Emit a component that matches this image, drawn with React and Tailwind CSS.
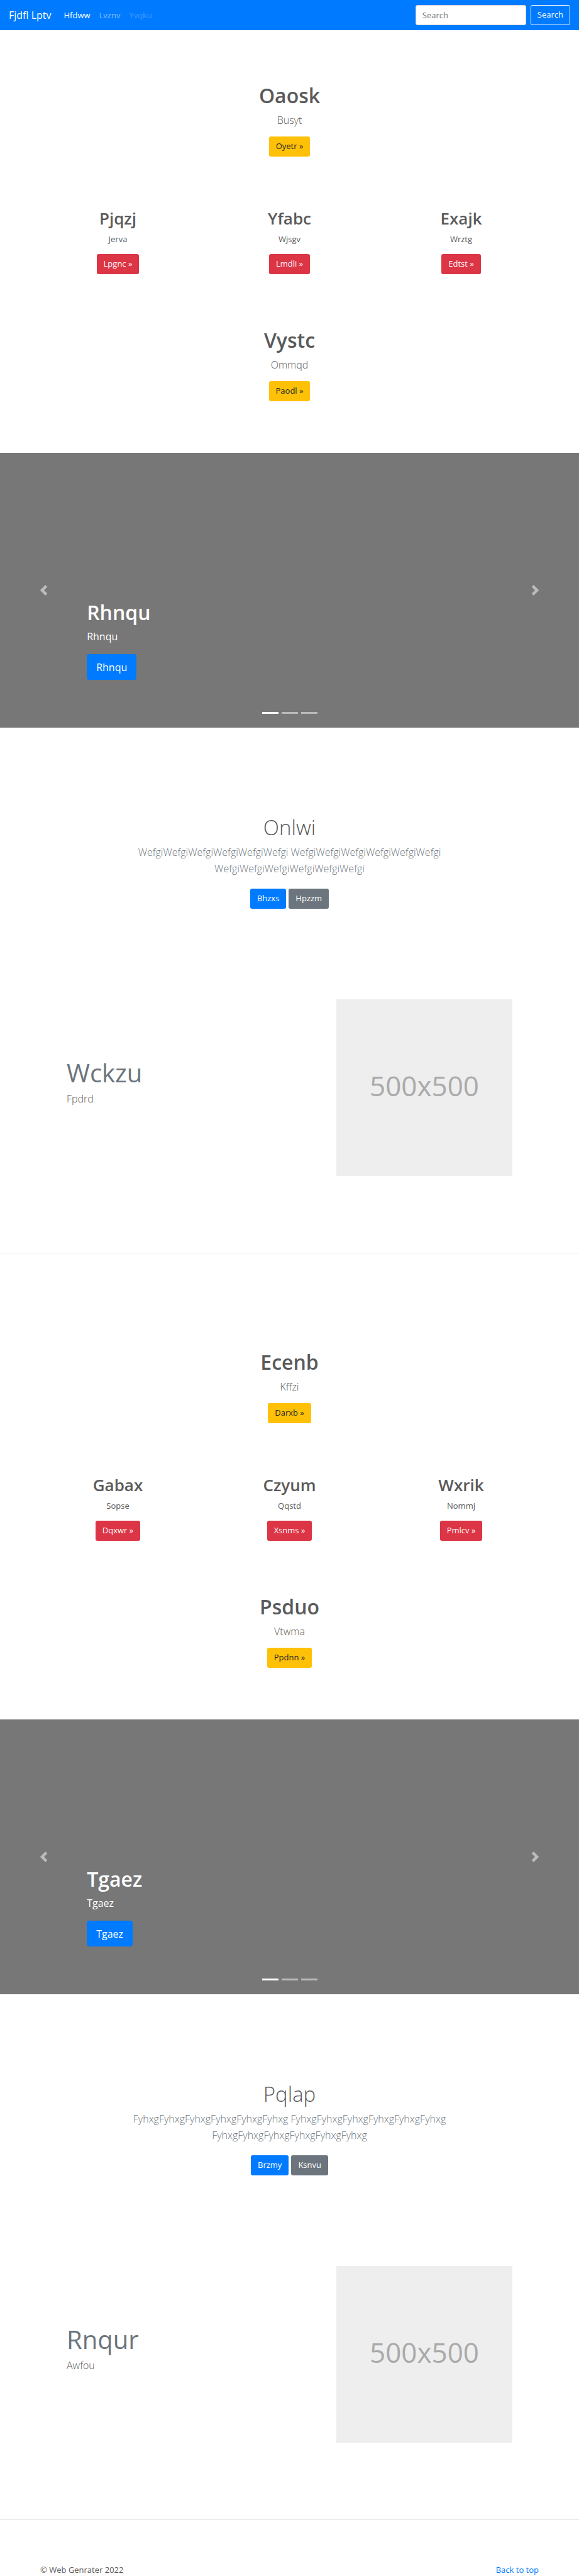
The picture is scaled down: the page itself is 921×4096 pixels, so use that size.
import React from "react";

const sections = [
  {
    top: { title: "Oaosk", text: "Busyt", action: "Oyetr »" },
    columns: [
      { title: "Pjqzj", text: "Jerva", action: "Lpgnc »" },
      { title: "Yfabc", text: "Wjsgv", action: "Lmdli »" },
      { title: "Exajk", text: "Wrztg", action: "Edtst »" },
    ],
    bottom: { title: "Vystc", text: "Ommqd", action: "Paodl »" },
    slide: "Rhnqu",
    album: {
      title: "Onlwi",
      text: "WefgiWefgiWefgiWefgiWefgiWefgi WefgiWefgiWefgiWefgiWefgiWefgi WefgiWefgiWefgiWefgiWefgiWefgi",
      primary: "Bhzxs",
      secondary: "Hpzzm",
    },
    feature: { title: "Wckzu", text: "Fpdrd" },
  },
  {
    top: { title: "Ecenb", text: "Kffzi", action: "Darxb »" },
    columns: [
      { title: "Gabax", text: "Sopse", action: "Dqxwr »" },
      { title: "Czyum", text: "Qqstd", action: "Xsnms »" },
      { title: "Wxrik", text: "Nommj", action: "Pmlcv »" },
    ],
    bottom: { title: "Psduo", text: "Vtwma", action: "Ppdnn »" },
    slide: "Tgaez",
    album: {
      title: "Pqlap",
      text: "FyhxgFyhxgFyhxgFyhxgFyhxgFyhxg FyhxgFyhxgFyhxgFyhxgFyhxgFyhxg FyhxgFyhxgFyhxgFyhxgFyhxgFyhxg",
      primary: "Brzmy",
      secondary: "Ksnvu",
    },
    feature: { title: "Rnqur", text: "Awfou" },
  },
];

const tones = {
  warning: "bg-[#ffc107] text-[#212529]",
  danger: "bg-[#dc3545] text-white",
  primary: "bg-[#007bff] text-white",
  secondary: "bg-[#6c757d] text-white",
};

function Button({ tone, children }) {
  return (
    <a href="#" className={`flex h-8 items-center rounded-[3px] px-[11px] text-[13px] ${tones[tone]}`}>
      {children}
    </a>
  );
}

function Navbar() {
  return (
    <nav className="flex h-12 items-center bg-[#007bff] px-[14px]">
      <a href="#" className="text-[16px] leading-[26px] text-white">Fjdfl Lptv</a>
      <ul className="ml-5 flex gap-[14px] text-[13px] leading-5">
        <li><a href="#" className="text-white">Hfdww</a></li>
        <li><a href="#" className="text-white/50">Lvznv</a></li>
        <li><a href="#" aria-disabled="true" className="text-white/25">Yvqku</a></li>
      </ul>
      <form className="ml-auto flex gap-[7px]">
        <input
          type="search"
          aria-label="Search"
          placeholder="Search"
          className="h-8 w-44 rounded-[3px] border border-[#ced4da] bg-white px-[10px] text-[13px] text-[#495057] placeholder:text-[#6c757d]"
        />
        <button type="button" className="h-8 rounded-[3px] border border-[#f8f9fa] px-[10px] text-[13px] text-[#f8f9fa]">
          Search
        </button>
      </form>
    </nav>
  );
}

function Hero({ title, text, action }) {
  return (
    <section className="flex flex-col items-center text-center">
      <h1 className="mb-[6px] text-[32px] font-semibold leading-[41px]">{title}</h1>
      <p className="mb-[13px] text-[16px] font-light leading-[26px]">{text}</p>
      <Button tone="warning">{action}</Button>
    </section>
  );
}

function Column({ title, text, action }) {
  return (
    <div className="flex flex-col items-center text-center">
      <h2 className="mb-[6px] text-[26px] font-semibold leading-[33px]">{title}</h2>
      <p className="mb-[14px] text-[13px] leading-5">{text}</p>
      <Button tone="danger">{action}</Button>
    </div>
  );
}

function Arrow({ d }) {
  return (
    <svg viewBox="0 0 8 8" className="h-[17px] w-[17px]" fill="#fff" aria-hidden="true">
      <path d={d} />
    </svg>
  );
}

function Carousel({ label }) {
  return (
    <section className="relative bg-[#777]">
      <div className="flex flex-col items-start px-[15%] pb-[76px] pt-[233px] text-white">
        <h1 className="mb-[5px] text-[32px] font-semibold leading-[41px]">{label}</h1>
        <p className="mb-[15px] text-[16px] leading-[26px]">{label}</p>
        <a href="#" className="flex h-[41px] items-center rounded-[4px] bg-[#007bff] px-[15px] text-[16px]">{label}</a>
      </div>
      <button type="button" aria-label="Previous" className="absolute inset-y-0 left-0 flex w-[15%] items-center justify-center opacity-50">
        <Arrow d="M5.25 0l-4 4 4 4 1.5-1.5-2.5-2.5 2.5-2.5-1.5-1.5z" />
      </button>
      <button type="button" aria-label="Next" className="absolute inset-y-0 right-0 flex w-[15%] items-center justify-center opacity-50">
        <Arrow d="M2.75 0l-1.5 1.5 2.5 2.5-2.5 2.5 1.5 1.5 4-4-4-4z" />
      </button>
      <div className="absolute inset-x-0 bottom-[22px] flex justify-center gap-[5px]">
        <span className="h-[3px] w-[26px] bg-white" />
        <span className="h-[3px] w-[26px] bg-white/50" />
        <span className="h-[3px] w-[26px] bg-white/50" />
      </div>
    </section>
  );
}

function Album({ title, text, primary, secondary }) {
  return (
    <section className="mx-auto flex max-w-[546px] flex-col items-center pt-[138px] text-center">
      <h1 className="mb-[6px] text-[33px] font-light leading-[41px]">{title}</h1>
      <p className="mb-[19px] text-[16px] font-light leading-[26px] text-[#6c757d]">{text}</p>
      <div className="flex gap-1">
        <Button tone="primary">{primary}</Button>
        <Button tone="secondary">{secondary}</Button>
      </div>
    </section>
  );
}

function Feature({ title, text }) {
  return (
    <section className="mt-36 flex justify-between px-[106px]">
      <div className="pt-[92px]">
        <h2 className="mb-[3px] text-[40px] leading-[50px] text-[#6c757d]">{title}</h2>
        <p className="text-[16px] font-light leading-[26px]">{text}</p>
      </div>
      <div role="img" aria-label="500x500" className="flex h-[281px] w-[280px] items-center justify-center bg-[#eee] pb-2 text-[44px] text-[#aaa]">
        500x500
      </div>
    </section>
  );
}

export default function App() {
  return (
    <div className="bg-white font-['Open_Sans','Noto_Sans',sans-serif] text-[#5a5a5a]">
      <Navbar />
      <main>
        {sections.map((s) => (
          <div key={s.slide} className="flex flex-col">
            <div className="pb-[82px] pt-[83px]">
              <Hero {...s.top} />
              <div className="mb-[84px] mt-[82px] grid grid-cols-3 px-[51px]">
                {s.columns.map((c) => (
                  <Column key={c.title} {...c} />
                ))}
              </div>
              <Hero {...s.bottom} />
            </div>
            <Carousel label={s.slide} />
            <Album {...s.album} />
            <Feature {...s.feature} />
            <hr className="mb-[69px] mt-[122px] border-t border-black/10" />
          </div>
        ))}
      </main>
      <footer className="flex justify-between px-16 text-[13px] leading-5">
        <p>© Web Genrater 2022</p>
        <a href="#" className="text-[#007bff]">Back to top</a>
      </footer>
    </div>
  );
}
